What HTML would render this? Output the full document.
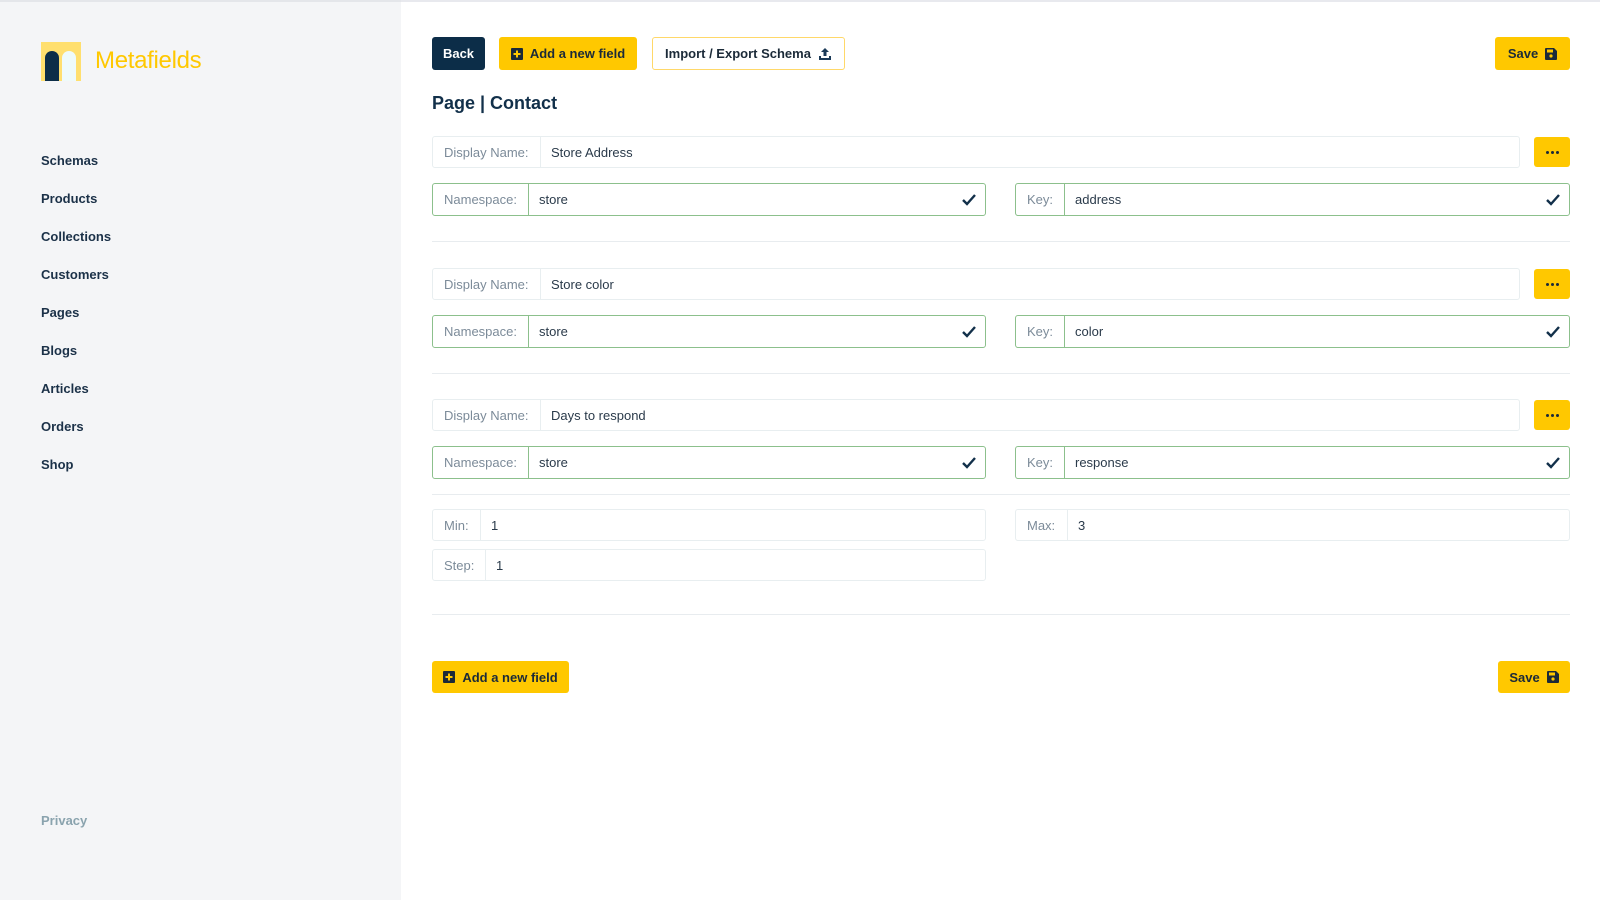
<!DOCTYPE html>
<html><head><meta charset="utf-8"><style>
*{box-sizing:border-box;margin:0;padding:0}
body{width:1600px;height:900px;position:relative;background:#fff;font-family:"Liberation Sans",sans-serif;color:#1b3148;overflow:hidden}
.a{position:absolute}
.side{left:0;top:0;width:401px;height:900px;background:#f4f5f7;border-top:2px solid #e4e6ea}
.top{left:401px;top:0;width:1199px;height:2px;background:#e8e9ee}
.nav{left:41px;font-size:13px;font-weight:bold;color:#1b3148}
.btn{display:flex;align-items:center;justify-content:center;font-size:13px;font-weight:bold;border-radius:3px;height:33px;gap:7px}
.y{background:#ffc800;color:#1b2a38}
.f{display:flex;border:1px solid #e8eef0;border-radius:3px;font-size:13px;height:32px;align-items:center;background:#fff}
.f .l{color:#7c8b99;padding:0 11px;height:100%;display:flex;align-items:center;border-right:1px solid #e8eef0}
.f .v{padding:0 10px;color:#2a3a4a;flex:1}
.g{border-color:#8cc08c;height:33px}
.g .l{border-right-color:#8cc08c}
.ck{margin-right:8px}
.dots{width:36px;height:30px;background:#ffc800;border-radius:3px;display:flex;align-items:center;justify-content:center;gap:2px}
.dots i{width:3px;height:3px;background:#1b2a38;border-radius:50%}
.hr{left:432px;width:1138px;height:1px;background:#e8ecef}
</style></head><body>
<div class="a side"></div><div class="a top"></div>
<svg class="a" style="left:41px;top:42px" width="40" height="39" viewBox="0 0 40 39"><rect width="40" height="39" fill="#ffdf6e"/><path d="M4 39V16a7 7 0 0 1 14 0v23z" fill="#0c2d48"/><path d="M21 39V16a7 7 0 0 1 14 0v23z" fill="#eefafa"/></svg>
<div class="a" style="left:95px;top:47px;font-size:24px;color:#ffc800;letter-spacing:-0.3px">Metafields</div>
<div class="a nav" style="top:153px">Schemas</div>
<div class="a nav" style="top:191px">Products</div>
<div class="a nav" style="top:229px">Collections</div>
<div class="a nav" style="top:267px">Customers</div>
<div class="a nav" style="top:305px">Pages</div>
<div class="a nav" style="top:343px">Blogs</div>
<div class="a nav" style="top:381px">Articles</div>
<div class="a nav" style="top:419px">Orders</div>
<div class="a nav" style="top:457px">Shop</div>
<div class="a nav" style="top:813px;color:#8aa3ae">Privacy</div>

<div class="a btn" style="left:432px;top:37px;width:53px;background:#0c2d48;color:#fff">Back</div>
<div class="a btn y" style="left:499px;top:37px;width:138px"><svg width="12" height="12" viewBox="0 0 12 12"><rect width="12" height="12" rx="1" fill="#1b2a38"/><path d="M6 2.5v7M2.5 6h7" stroke="#ffc800" stroke-width="2"/></svg>Add a new field</div>
<div class="a btn" style="left:652px;top:37px;width:193px;border:1px solid #ffd869;color:#1b2a38">Import / Export Schema <svg width="14" height="14" viewBox="0 0 14 14"><path d="M7 1l4 4H8.5v4h-3V5H3z" fill="#1b3a58"/><path d="M1 9v4h12V9h-2v2H3V9z" fill="#1b3a58"/></svg></div>
<div class="a btn y" style="left:1495px;top:37px;width:75px">Save <svg width="12" height="12" viewBox="0 0 12 12"><path d="M0 1a1 1 0 0 1 1-1h8l3 3v8a1 1 0 0 1-1 1H1a1 1 0 0 1-1-1z" fill="#1b2a38"/><rect x="2" y="1.5" width="6" height="3" fill="#ffc800"/><circle cx="6" cy="8" r="1.6" fill="#ffc800"/></svg></div>
<div class="a" style="left:432px;top:93px;font-size:18px;font-weight:bold;color:#12304a">Page | Contact</div>

<div class="a f" style="left:432px;top:136px;width:1088px"><div class="l" style="width:108px">Display Name:</div><div class="v">Store Address</div></div>
<div class="a dots" style="left:1534px;top:137px"><i></i><i></i><i></i></div>
<div class="a f g" style="left:432px;top:183px;width:554px"><div class="l" style="width:96px">Namespace:</div><div class="v">store</div><svg class="ck" width="16" height="14" viewBox="0 0 16 14"><path d="M2 7l4 4 8-9" fill="none" stroke="#12304a" stroke-width="2.4"/></svg></div>
<div class="a f g" style="left:1015px;top:183px;width:555px"><div class="l" style="width:49px">Key:</div><div class="v">address</div><svg class="ck" width="16" height="14" viewBox="0 0 16 14"><path d="M2 7l4 4 8-9" fill="none" stroke="#12304a" stroke-width="2.4"/></svg></div>
<div class="a hr" style="top:241px"></div>

<div class="a f" style="left:432px;top:268px;width:1088px"><div class="l" style="width:108px">Display Name:</div><div class="v">Store color</div></div>
<div class="a dots" style="left:1534px;top:269px"><i></i><i></i><i></i></div>
<div class="a f g" style="left:432px;top:315px;width:554px"><div class="l" style="width:96px">Namespace:</div><div class="v">store</div><svg class="ck" width="16" height="14" viewBox="0 0 16 14"><path d="M2 7l4 4 8-9" fill="none" stroke="#12304a" stroke-width="2.4"/></svg></div>
<div class="a f g" style="left:1015px;top:315px;width:555px"><div class="l" style="width:49px">Key:</div><div class="v">color</div><svg class="ck" width="16" height="14" viewBox="0 0 16 14"><path d="M2 7l4 4 8-9" fill="none" stroke="#12304a" stroke-width="2.4"/></svg></div>
<div class="a hr" style="top:373px"></div>

<div class="a f" style="left:432px;top:399px;width:1088px"><div class="l" style="width:108px">Display Name:</div><div class="v">Days to respond</div></div>
<div class="a dots" style="left:1534px;top:400px"><i></i><i></i><i></i></div>
<div class="a f g" style="left:432px;top:446px;width:554px"><div class="l" style="width:96px">Namespace:</div><div class="v">store</div><svg class="ck" width="16" height="14" viewBox="0 0 16 14"><path d="M2 7l4 4 8-9" fill="none" stroke="#12304a" stroke-width="2.4"/></svg></div>
<div class="a f g" style="left:1015px;top:446px;width:555px"><div class="l" style="width:49px">Key:</div><div class="v">response</div><svg class="ck" width="16" height="14" viewBox="0 0 16 14"><path d="M2 7l4 4 8-9" fill="none" stroke="#12304a" stroke-width="2.4"/></svg></div>
<div class="a hr" style="top:494px"></div>
<div class="a f" style="left:432px;top:509px;width:554px"><div class="l" style="width:48px">Min:</div><div class="v">1</div></div>
<div class="a f" style="left:1015px;top:509px;width:555px"><div class="l" style="width:52px">Max:</div><div class="v">3</div></div>
<div class="a f" style="left:432px;top:549px;width:554px"><div class="l" style="width:53px">Step:</div><div class="v">1</div></div>
<div class="a hr" style="top:614px"></div>

<div class="a btn y" style="left:432px;top:661px;width:137px;height:32px"><svg width="12" height="12" viewBox="0 0 12 12"><rect width="12" height="12" rx="1" fill="#1b2a38"/><path d="M6 2.5v7M2.5 6h7" stroke="#ffc800" stroke-width="2"/></svg>Add a new field</div>
<div class="a btn y" style="left:1498px;top:661px;width:72px;height:32px">Save <svg width="12" height="12" viewBox="0 0 12 12"><path d="M0 1a1 1 0 0 1 1-1h8l3 3v8a1 1 0 0 1-1 1H1a1 1 0 0 1-1-1z" fill="#1b2a38"/><rect x="2" y="1.5" width="6" height="3" fill="#ffc800"/><circle cx="6" cy="8" r="1.6" fill="#ffc800"/></svg></div>
</body></html>
